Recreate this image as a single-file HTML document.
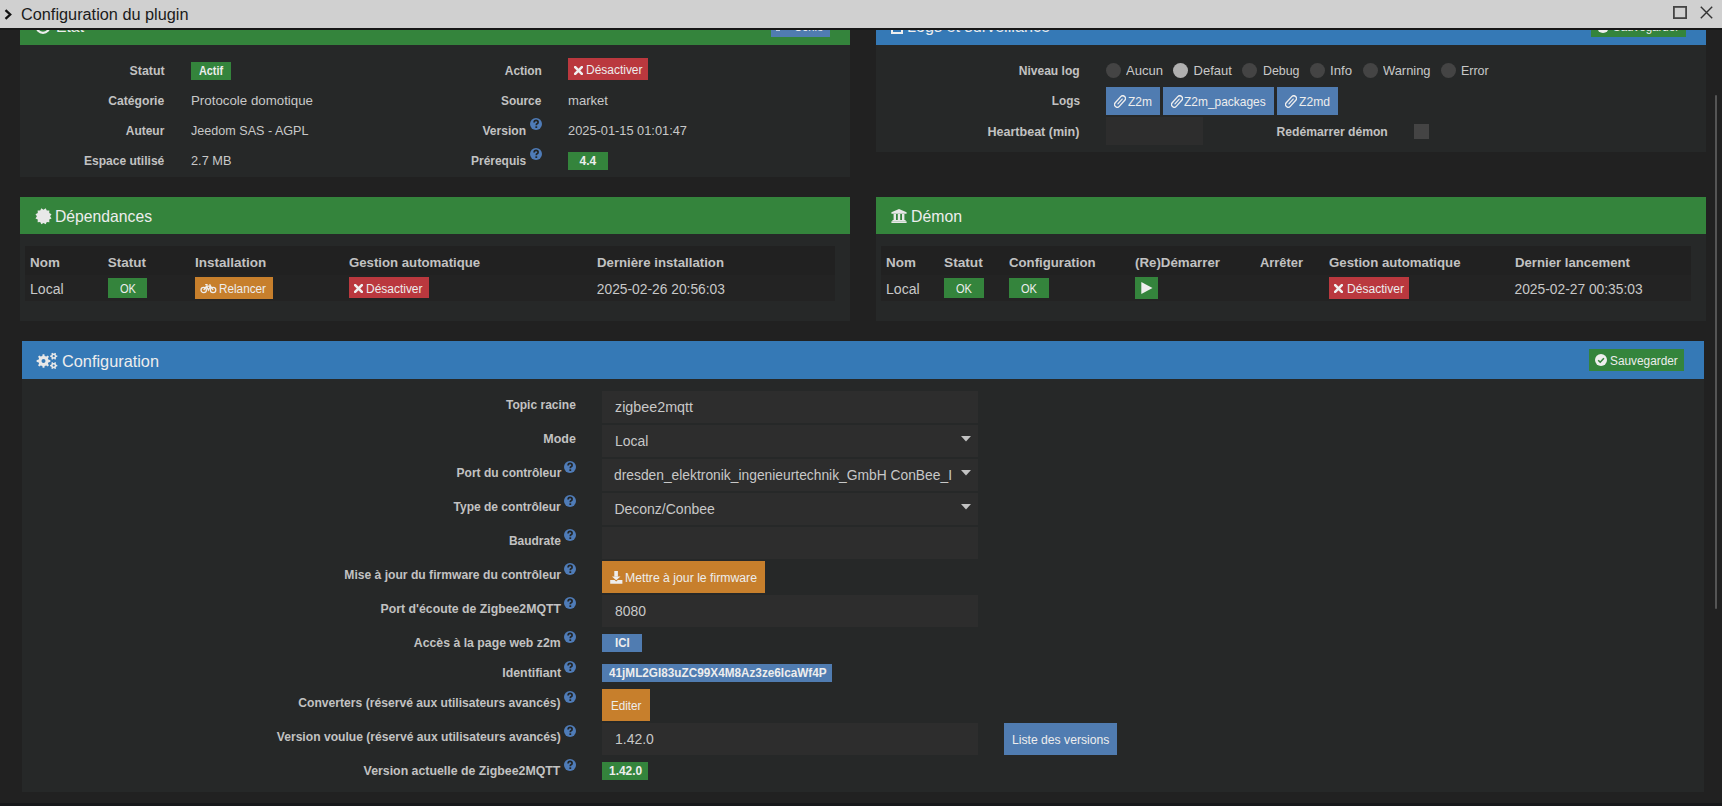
<!DOCTYPE html>
<html><head><meta charset="utf-8"><style>
html,body{margin:0;padding:0;}
body{width:1722px;height:806px;overflow:hidden;position:relative;background:#212121;font-family:"Liberation Sans",sans-serif;}
body>div,body>svg{position:absolute;}
.t{white-space:nowrap;}
</style></head><body>
<div style="left:0px;top:803px;width:1722px;height:3px;background:#17181a;"></div>
<div style="left:20px;top:30px;width:830px;height:15px;background:#34843c;"></div>
<div style="left:20px;top:45px;width:830px;height:132px;background:#262828;"></div>
<div style="left:771px;top:30px;width:59px;height:7px;background:#507cb1;"></div>
<svg style="left:35px;top:17px;width:16px;height:18px;" viewBox="0 0 16 18"><circle cx="8" cy="9" r="6.8" stroke="#eee" stroke-width="2.2" fill="none"/></svg>
<div class="t" style="left:55.90px;top:18.00px;font-size:16.5px;line-height:16.5px;color:#ededed;transform:scaleX(0.9540);transform-origin:left top;">État</div>
<div class="t" style="left:793.50px;top:21.00px;font-size:12.5px;line-height:12.5px;color:#ededed;transform:scaleX(0.8881);transform-origin:left top;">Confs</div>
<div style="left:776px;top:30px;width:4px;height:1px;background:#dfe6f0;opacity:0.8"></div>
<div class="t" style="left:130.13px;top:65.00px;font-size:12.2px;line-height:12.2px;font-weight:bold;color:#c2c2c2;transform:scaleX(1.0126);transform-origin:right top;">Statut</div>
<div class="t" style="left:108.43px;top:95.00px;font-size:12.2px;line-height:12.2px;font-weight:bold;color:#c2c2c2;transform:scaleX(0.9952);transform-origin:right top;">Catégorie</div>
<div class="t" style="left:125.39px;top:125.00px;font-size:12.2px;line-height:12.2px;font-weight:bold;color:#c2c2c2;transform:scaleX(0.9794);transform-origin:right top;">Auteur</div>
<div class="t" style="left:83.33px;top:155.00px;font-size:12.2px;line-height:12.2px;font-weight:bold;color:#c2c2c2;transform:scaleX(0.9880);transform-origin:right top;">Espace utilisé</div>
<div style="left:191px;top:62px;width:40px;height:18px;background:#34843c;"></div>
<div class="t" style="left:199.00px;top:65.00px;font-size:12px;line-height:12px;font-weight:bold;color:#ededed;transform:scaleX(0.9000);transform-origin:left top;">Actif</div>
<div class="t" style="left:191.00px;top:94.00px;font-size:13px;line-height:13px;color:#c8c8c8;transform:scaleX(1.0231);transform-origin:left top;">Protocole domotique</div>
<div class="t" style="left:191.00px;top:124.00px;font-size:13px;line-height:13px;color:#c8c8c8;transform:scaleX(0.9679);transform-origin:left top;">Jeedom SAS - AGPL</div>
<div class="t" style="left:191.00px;top:154.00px;font-size:13px;line-height:13px;color:#c8c8c8;transform:scaleX(0.9809);transform-origin:left top;">2.7 MB</div>
<div class="t" style="left:503.65px;top:65.00px;font-size:12.2px;line-height:12.2px;font-weight:bold;color:#c2c2c2;transform:scaleX(0.9801);transform-origin:right top;">Action</div>
<div class="t" style="left:500.24px;top:95.00px;font-size:12.2px;line-height:12.2px;font-weight:bold;color:#c2c2c2;transform:scaleX(0.9768);transform-origin:right top;">Source</div>
<div class="t" style="left:481.92px;top:125.00px;font-size:12.2px;line-height:12.2px;font-weight:bold;color:#c2c2c2;transform:scaleX(0.9914);transform-origin:right top;">Version</div>
<div class="t" style="left:469.72px;top:155.00px;font-size:12.2px;line-height:12.2px;font-weight:bold;color:#c2c2c2;transform:scaleX(0.9825);transform-origin:right top;">Prérequis</div>
<svg style="left:529.5px;top:118px;width:12px;height:12px;" viewBox="0 0 12 12"><circle cx="6" cy="6" r="6" fill="#4f7cb8"/><path d="M4.1 4.5 Q4.1 2.4 6.1 2.4 Q8.1 2.4 8.1 4.2 Q8.1 5.3 7 5.8 Q6.3 6.2 6.3 7.2" stroke="#232525" stroke-width="1.7" fill="none"/><rect x="5.4" y="8.3" width="1.8" height="1.7" fill="#232525"/></svg>
<svg style="left:529.5px;top:148px;width:12px;height:12px;" viewBox="0 0 12 12"><circle cx="6" cy="6" r="6" fill="#4f7cb8"/><path d="M4.1 4.5 Q4.1 2.4 6.1 2.4 Q8.1 2.4 8.1 4.2 Q8.1 5.3 7 5.8 Q6.3 6.2 6.3 7.2" stroke="#232525" stroke-width="1.7" fill="none"/><rect x="5.4" y="8.3" width="1.8" height="1.7" fill="#232525"/></svg>
<div style="left:568px;top:58px;width:80px;height:22px;background:#ba383e;"></div>
<svg style="left:573.5px;top:65.5px;width:9px;height:9px;" viewBox="0 0 9 9"><path d="M1.2 1.2 L7.8 7.8 M7.8 1.2 L1.2 7.8" stroke="#f0f0f0" stroke-width="2.6" stroke-linecap="square"/></svg>
<div class="t" style="left:585.50px;top:64.00px;font-size:12.5px;line-height:12.5px;color:#ededed;transform:scaleX(0.9569);transform-origin:left top;">Désactiver</div>
<div class="t" style="left:568.00px;top:94.00px;font-size:13px;line-height:13px;color:#c8c8c8;transform:scaleX(1.0068);transform-origin:left top;">market</div>
<div class="t" style="left:568.00px;top:124.00px;font-size:13px;line-height:13px;color:#c8c8c8;transform:scaleX(0.9858);transform-origin:left top;">2025-01-15 01:01:47</div>
<div style="left:568px;top:152px;width:40px;height:18px;background:#34843c;"></div>
<div class="t" style="left:579.50px;top:155.00px;font-size:12px;line-height:12px;font-weight:bold;color:#ededed;">4.4</div>
<div style="left:876px;top:30px;width:830px;height:15px;background:#3579b6;"></div>
<div style="left:876px;top:45px;width:830px;height:107px;background:#262828;"></div>
<div style="left:1591px;top:30px;width:95px;height:7px;background:#34843c;"></div>
<div style="left:891px;top:18px;width:12px;height:16px;background:transparent;border:2px solid #eee;box-sizing:border-box;"></div>
<div class="t" style="left:907.40px;top:18.00px;font-size:16.5px;line-height:16.5px;color:#ededed;transform:scaleX(0.9805);transform-origin:left top;">Logs et surveillance</div>
<svg style="left:1597px;top:21px;width:12px;height:12px;" viewBox="0 0 12 12"><circle cx="6" cy="6" r="6" fill="#eee"/></svg>
<div class="t" style="left:1612.70px;top:21.00px;font-size:12.5px;line-height:12.5px;color:#ededed;transform:scaleX(0.9221);transform-origin:left top;">Sauvegarder</div>
<div class="t" style="left:1018.11px;top:65.00px;font-size:12.2px;line-height:12.2px;font-weight:bold;color:#c2c2c2;transform:scaleX(0.9888);transform-origin:right top;">Niveau log</div>
<div class="t" style="left:1050.66px;top:95.00px;font-size:12.2px;line-height:12.2px;font-weight:bold;color:#c2c2c2;transform:scaleX(0.9711);transform-origin:right top;">Logs</div>
<div class="t" style="left:990.32px;top:126.00px;font-size:12.2px;line-height:12.2px;font-weight:bold;color:#c2c2c2;transform:scaleX(1.0281);transform-origin:right top;">Heartbeat (min)</div>
<div style="left:1106px;top:63px;width:15px;height:15px;background:#444444;border-radius:50%;"></div>
<div class="t" style="left:1126.00px;top:64.00px;font-size:13px;line-height:13px;color:#c8c8c8;transform:scaleX(1.0037);transform-origin:left top;">Aucun</div>
<div style="left:1173px;top:63px;width:15px;height:15px;background:#b0b0b0;border-radius:50%;"></div>
<div class="t" style="left:1193.60px;top:64.00px;font-size:13px;line-height:13px;color:#c8c8c8;">Defaut</div>
<div style="left:1242px;top:63px;width:15px;height:15px;background:#444444;border-radius:50%;"></div>
<div class="t" style="left:1262.70px;top:64.00px;font-size:13px;line-height:13px;color:#c8c8c8;transform:scaleX(0.9528);transform-origin:left top;">Debug</div>
<div style="left:1310px;top:63px;width:15px;height:15px;background:#444444;border-radius:50%;"></div>
<div class="t" style="left:1330.00px;top:64.00px;font-size:13px;line-height:13px;color:#c8c8c8;transform:scaleX(1.0146);transform-origin:left top;">Info</div>
<div style="left:1363px;top:63px;width:15px;height:15px;background:#444444;border-radius:50%;"></div>
<div class="t" style="left:1383.00px;top:64.00px;font-size:13px;line-height:13px;color:#c8c8c8;transform:scaleX(0.9911);transform-origin:left top;">Warning</div>
<div style="left:1441px;top:63px;width:15px;height:15px;background:#444444;border-radius:50%;"></div>
<div class="t" style="left:1461.00px;top:64.00px;font-size:13px;line-height:13px;color:#c8c8c8;transform:scaleX(0.9588);transform-origin:left top;">Error</div>
<div style="left:1106px;top:87px;width:54px;height:28px;background:#507cb1;"></div>
<svg style="left:1113.5px;top:95px;width:12px;height:13px;" viewBox="0 0 12 13"><g transform="rotate(42 6 6.5)"><rect x="3.3" y="-0.3" width="5.4" height="13.6" rx="2.7" stroke="#eeeeee" stroke-width="1.35" fill="none"/><path d="M6 3.2 V9.6" stroke="#eeeeee" stroke-width="1.2" stroke-linecap="round"/></g></svg>
<div class="t" style="left:1127.50px;top:95.00px;font-size:13px;line-height:13px;color:#ededed;transform:scaleX(0.9230);transform-origin:left top;">Z2m</div>
<div style="left:1163px;top:87px;width:111px;height:28px;background:#507cb1;"></div>
<svg style="left:1171px;top:95px;width:12px;height:13px;" viewBox="0 0 12 13"><g transform="rotate(42 6 6.5)"><rect x="3.3" y="-0.3" width="5.4" height="13.6" rx="2.7" stroke="#eeeeee" stroke-width="1.35" fill="none"/><path d="M6 3.2 V9.6" stroke="#eeeeee" stroke-width="1.2" stroke-linecap="round"/></g></svg>
<div class="t" style="left:1184.30px;top:95.00px;font-size:13px;line-height:13px;color:#ededed;transform:scaleX(0.9192);transform-origin:left top;">Z2m_packages</div>
<div style="left:1277px;top:87px;width:61px;height:28px;background:#507cb1;"></div>
<svg style="left:1285.3px;top:95px;width:12px;height:13px;" viewBox="0 0 12 13"><g transform="rotate(42 6 6.5)"><rect x="3.3" y="-0.3" width="5.4" height="13.6" rx="2.7" stroke="#eeeeee" stroke-width="1.35" fill="none"/><path d="M6 3.2 V9.6" stroke="#eeeeee" stroke-width="1.2" stroke-linecap="round"/></g></svg>
<div class="t" style="left:1299.20px;top:95.00px;font-size:13px;line-height:13px;color:#ededed;transform:scaleX(0.9329);transform-origin:left top;">Z2md</div>
<div style="left:1106px;top:117px;width:97px;height:28px;background:#2d2d2d;"></div>
<div class="t" style="left:1275.53px;top:126.00px;font-size:12.2px;line-height:12.2px;font-weight:bold;color:#c2c2c2;transform:scaleX(0.9958);transform-origin:right top;">Redémarrer démon</div>
<div style="left:1414px;top:124px;width:15px;height:15px;background:#444444;"></div>
<div style="left:20px;top:197px;width:830px;height:37px;background:#34843c;"></div>
<div style="left:20px;top:234px;width:830px;height:87px;background:#262828;"></div>
<div style="left:25px;top:246px;width:810px;height:29px;background:#212121;"></div>
<div style="left:25px;top:275px;width:810px;height:26px;background:#232323;"></div>
<div class="t" style="left:55.40px;top:208.00px;font-size:16.5px;line-height:16.5px;color:#ededed;transform:scaleX(0.9526);transform-origin:left top;">Dépendances</div>
<svg style="left:34.5px;top:207.7px;width:17px;height:17px;" viewBox="0 0 17 17"><polygon points="10.65,0.28 11.80,2.58 14.37,2.43 14.22,5.00 16.52,6.15 15.10,8.30 16.52,10.45 14.22,11.60 14.37,14.17 11.80,14.02 10.65,16.32 8.50,14.90 6.35,16.32 5.20,14.02 2.63,14.17 2.78,11.60 0.48,10.45 1.90,8.30 0.48,6.15 2.78,5.00 2.63,2.43 5.20,2.58 6.35,0.28 8.50,1.70" fill="#e8e8e8"/></svg>
<div class="t" style="left:30.00px;top:256.00px;font-size:13.5px;line-height:13.5px;font-weight:bold;color:#c2c2c2;transform:scaleX(0.9933);transform-origin:left top;">Nom</div>
<div class="t" style="left:107.80px;top:256.00px;font-size:13.5px;line-height:13.5px;font-weight:bold;color:#c2c2c2;">Statut</div>
<div class="t" style="left:195.10px;top:256.00px;font-size:13.5px;line-height:13.5px;font-weight:bold;color:#c2c2c2;">Installation</div>
<div class="t" style="left:348.80px;top:256.00px;font-size:13.5px;line-height:13.5px;font-weight:bold;color:#c2c2c2;transform:scaleX(0.9772);transform-origin:left top;">Gestion automatique</div>
<div class="t" style="left:596.80px;top:256.00px;font-size:13.5px;line-height:13.5px;font-weight:bold;color:#c2c2c2;transform:scaleX(0.9785);transform-origin:left top;">Dernière installation</div>
<div class="t" style="left:30.20px;top:283.00px;font-size:13.8px;line-height:13.8px;color:#c8c8c8;transform:scaleX(1.0215);transform-origin:left top;">Local</div>
<div style="left:108px;top:278px;width:39px;height:20px;background:#34843c;"></div>
<div class="t" style="left:119.50px;top:282.00px;font-size:13px;line-height:13px;color:#ededed;transform:scaleX(0.8518);transform-origin:left top;">OK</div>
<div style="left:195px;top:277px;width:78px;height:22px;background:#c77f2c;"></div>
<div class="t" style="left:219.30px;top:283.00px;font-size:12.5px;line-height:12.5px;color:#ededed;transform:scaleX(0.9395);transform-origin:left top;">Relancer</div>
<svg style="left:200px;top:283px;width:17px;height:11px;" viewBox="0 0 17 11"><circle cx="3.7" cy="7" r="2.7" stroke="#eee" stroke-width="1.25" fill="none"/><circle cx="13.1" cy="7" r="2.7" stroke="#eee" stroke-width="1.25" fill="none"/><path d="M3.7 7 L6.6 3.2 H10.6 L13.1 7 M6.6 3.2 L8.4 7 L10.6 3.2 M9.6 1.3 L10.6 3.2 M5.2 1.6 H7.6" stroke="#eee" stroke-width="1.3" fill="none"/></svg>
<div style="left:349px;top:277px;width:80px;height:21px;background:#ba383e;"></div>
<svg style="left:354px;top:284px;width:9px;height:9px;" viewBox="0 0 9 9"><path d="M1.2 1.2 L7.8 7.8 M7.8 1.2 L1.2 7.8" stroke="#f0f0f0" stroke-width="2.6" stroke-linecap="square"/></svg>
<div class="t" style="left:365.90px;top:283.00px;font-size:12.5px;line-height:12.5px;color:#ededed;transform:scaleX(0.9569);transform-origin:left top;">Désactiver</div>
<div class="t" style="left:596.80px;top:283.00px;font-size:13.8px;line-height:13.8px;color:#c8c8c8;">2025-02-26 20:56:03</div>
<div style="left:876px;top:197px;width:830px;height:37px;background:#34843c;"></div>
<div style="left:876px;top:234px;width:830px;height:87px;background:#262828;"></div>
<div style="left:881px;top:246px;width:810px;height:29px;background:#212121;"></div>
<div style="left:881px;top:275px;width:810px;height:26px;background:#232323;"></div>
<div class="t" style="left:911.00px;top:208.00px;font-size:16.5px;line-height:16.5px;color:#ededed;transform:scaleX(0.9588);transform-origin:left top;">Démon</div>
<svg style="left:891px;top:209px;width:16px;height:14px;" viewBox="0 0 16 14"><path d="M8 0 L15.6 3.2 V4.8 H0.4 V3.2 Z" fill="#e8e8e8"/><rect x="2.6" y="5" width="2.4" height="6" fill="#e8e8e8"/><rect x="6.8" y="5" width="2.4" height="6" fill="#e8e8e8"/><rect x="11" y="5" width="2.4" height="6" fill="#e8e8e8"/><rect x="1.4" y="11" width="13.2" height="1.3" fill="#e8e8e8"/><rect x="0.4" y="12.3" width="15.2" height="1.7" fill="#e8e8e8"/></svg>
<div class="t" style="left:886.00px;top:256.00px;font-size:13.5px;line-height:13.5px;font-weight:bold;color:#c2c2c2;transform:scaleX(0.9933);transform-origin:left top;">Nom</div>
<div class="t" style="left:944.00px;top:256.00px;font-size:13.5px;line-height:13.5px;font-weight:bold;color:#c2c2c2;transform:scaleX(1.0144);transform-origin:left top;">Statut</div>
<div class="t" style="left:1009.00px;top:256.00px;font-size:13.5px;line-height:13.5px;font-weight:bold;color:#c2c2c2;transform:scaleX(0.9776);transform-origin:left top;">Configuration</div>
<div class="t" style="left:1135.00px;top:256.00px;font-size:13.5px;line-height:13.5px;font-weight:bold;color:#c2c2c2;transform:scaleX(0.9851);transform-origin:left top;">(Re)Démarrer</div>
<div class="t" style="left:1259.60px;top:256.00px;font-size:13.5px;line-height:13.5px;font-weight:bold;color:#c2c2c2;transform:scaleX(0.9551);transform-origin:left top;">Arrêter</div>
<div class="t" style="left:1329.00px;top:256.00px;font-size:13.5px;line-height:13.5px;font-weight:bold;color:#c2c2c2;transform:scaleX(0.9794);transform-origin:left top;">Gestion automatique</div>
<div class="t" style="left:1514.50px;top:256.00px;font-size:13.5px;line-height:13.5px;font-weight:bold;color:#c2c2c2;transform:scaleX(0.9763);transform-origin:left top;">Dernier lancement</div>
<div class="t" style="left:886.20px;top:283.00px;font-size:13.8px;line-height:13.8px;color:#c8c8c8;transform:scaleX(1.0215);transform-origin:left top;">Local</div>
<div style="left:944px;top:278px;width:40px;height:20px;background:#34843c;"></div>
<div class="t" style="left:955.50px;top:282.00px;font-size:13px;line-height:13px;color:#ededed;transform:scaleX(0.8518);transform-origin:left top;">OK</div>
<div style="left:1009px;top:278px;width:40px;height:20px;background:#34843c;"></div>
<div class="t" style="left:1020.50px;top:282.00px;font-size:13px;line-height:13px;color:#ededed;transform:scaleX(0.8518);transform-origin:left top;">OK</div>
<div style="left:1135px;top:277px;width:23px;height:22px;background:#34843c;"></div>
<svg style="left:1140.5px;top:282.4px;width:12px;height:12px;" viewBox="0 0 12 12"><path d="M0.3 0.1 L11.5 6 L0.3 11.9 Z" fill="#eee"/></svg>
<div style="left:1329px;top:277px;width:80px;height:22px;background:#ba383e;"></div>
<svg style="left:1334px;top:284px;width:9px;height:9px;" viewBox="0 0 9 9"><path d="M1.2 1.2 L7.8 7.8 M7.8 1.2 L1.2 7.8" stroke="#f0f0f0" stroke-width="2.6" stroke-linecap="square"/></svg>
<div class="t" style="left:1346.50px;top:283.00px;font-size:12.5px;line-height:12.5px;color:#ededed;transform:scaleX(0.9653);transform-origin:left top;">Désactiver</div>
<div class="t" style="left:1514.50px;top:283.00px;font-size:13.8px;line-height:13.8px;color:#c8c8c8;">2025-02-27 00:35:03</div>
<div style="left:22px;top:341px;width:1682px;height:38px;background:#3579b6;"></div>
<div style="left:22px;top:379px;width:1682px;height:413px;background:#262828;"></div>
<div class="t" style="left:62.00px;top:353.00px;font-size:16.5px;line-height:16.5px;color:#ededed;transform:scaleX(0.9883);transform-origin:left top;">Configuration</div>
<svg style="left:36px;top:352px;width:22px;height:18px;" viewBox="0 0 22 18"><path fill-rule="evenodd" fill="#e8e8e8" d="M12.57 7.87 L14.34 8.09 L14.34 9.91 L12.57 10.13 L11.89 11.79 L12.98 13.19 L11.69 14.48 L10.29 13.39 L8.63 14.07 L8.41 15.84 L6.59 15.84 L6.37 14.07 L4.71 13.39 L3.31 14.48 L2.02 13.19 L3.11 11.79 L2.43 10.13 L0.66 9.91 L0.66 8.09 L2.43 7.87 L3.11 6.21 L2.02 4.81 L3.31 3.52 L4.71 4.61 L6.37 3.93 L6.59 2.16 L8.41 2.16 L8.63 3.93 L10.29 4.61 L11.69 3.52 L12.98 4.81 L11.89 6.21 Z M9.50 9.00 A2.00 2.00 0 1 0 5.50 9.00 A2.00 2.00 0 1 0 9.50 9.00 Z"/><path fill-rule="evenodd" fill="#e8e8e8" d="M20.28 3.40 L21.34 3.54 L21.34 4.86 L20.28 5.00 L19.68 6.03 L20.09 7.02 L18.95 7.68 L18.30 6.83 L17.10 6.83 L16.45 7.68 L15.31 7.02 L15.72 6.03 L15.12 5.00 L14.06 4.86 L14.06 3.54 L15.12 3.40 L15.72 2.37 L15.31 1.38 L16.45 0.72 L17.10 1.57 L18.30 1.57 L18.95 0.72 L20.09 1.38 L19.68 2.37 Z M18.80 4.20 A1.10 1.10 0 1 0 16.60 4.20 A1.10 1.10 0 1 0 18.80 4.20 Z"/><path fill-rule="evenodd" fill="#e8e8e8" d="M20.28 12.80 L21.34 12.94 L21.34 14.26 L20.28 14.40 L19.68 15.43 L20.09 16.42 L18.95 17.08 L18.30 16.23 L17.10 16.23 L16.45 17.08 L15.31 16.42 L15.72 15.43 L15.12 14.40 L14.06 14.26 L14.06 12.94 L15.12 12.80 L15.72 11.77 L15.31 10.78 L16.45 10.12 L17.10 10.97 L18.30 10.97 L18.95 10.12 L20.09 10.78 L19.68 11.77 Z M18.80 13.60 A1.10 1.10 0 1 0 16.60 13.60 A1.10 1.10 0 1 0 18.80 13.60 Z"/></svg>
<div style="left:1589px;top:349px;width:95px;height:22px;background:#34843c;"></div>
<svg style="left:1595px;top:354px;width:12px;height:12px;" viewBox="0 0 12 12"><circle cx="6" cy="6" r="6" fill="#eee"/><path d="M3.2 6.2 L5.2 8.2 L8.9 4.3" stroke="#34843c" stroke-width="1.6" fill="none"/></svg>
<div class="t" style="left:1610.20px;top:355.00px;font-size:12.5px;line-height:12.5px;color:#ededed;transform:scaleX(0.9472);transform-origin:left top;">Sauvegarder</div>
<div class="t" style="left:505.34px;top:399.00px;font-size:12.2px;line-height:12.2px;font-weight:bold;color:#c2c2c2;transform:scaleX(0.9865);transform-origin:right top;">Topic racine</div>
<div class="t" style="left:544.45px;top:433.00px;font-size:12.2px;line-height:12.2px;font-weight:bold;color:#c2c2c2;transform:scaleX(1.0234);transform-origin:right top;">Mode</div>
<div class="t" style="left:454.59px;top:467.00px;font-size:12.2px;line-height:12.2px;font-weight:bold;color:#c2c2c2;transform:scaleX(0.9848);transform-origin:right top;">Port du contrôleur</div>
<svg style="left:564px;top:461px;width:12px;height:12px;" viewBox="0 0 12 12"><circle cx="6" cy="6" r="6" fill="#4f7cb8"/><path d="M4.1 4.5 Q4.1 2.4 6.1 2.4 Q8.1 2.4 8.1 4.2 Q8.1 5.3 7 5.8 Q6.3 6.2 6.3 7.2" stroke="#232525" stroke-width="1.7" fill="none"/><rect x="5.4" y="8.3" width="1.8" height="1.7" fill="#232525"/></svg>
<div class="t" style="left:452.09px;top:501.00px;font-size:12.2px;line-height:12.2px;font-weight:bold;color:#c2c2c2;transform:scaleX(0.9861);transform-origin:right top;">Type de contrôleur</div>
<svg style="left:564px;top:495px;width:12px;height:12px;" viewBox="0 0 12 12"><circle cx="6" cy="6" r="6" fill="#4f7cb8"/><path d="M4.1 4.5 Q4.1 2.4 6.1 2.4 Q8.1 2.4 8.1 4.2 Q8.1 5.3 7 5.8 Q6.3 6.2 6.3 7.2" stroke="#232525" stroke-width="1.7" fill="none"/><rect x="5.4" y="8.3" width="1.8" height="1.7" fill="#232525"/></svg>
<div class="t" style="left:508.12px;top:535.00px;font-size:12.2px;line-height:12.2px;font-weight:bold;color:#c2c2c2;transform:scaleX(0.9833);transform-origin:right top;">Baudrate</div>
<svg style="left:564px;top:529px;width:12px;height:12px;" viewBox="0 0 12 12"><circle cx="6" cy="6" r="6" fill="#4f7cb8"/><path d="M4.1 4.5 Q4.1 2.4 6.1 2.4 Q8.1 2.4 8.1 4.2 Q8.1 5.3 7 5.8 Q6.3 6.2 6.3 7.2" stroke="#232525" stroke-width="1.7" fill="none"/><rect x="5.4" y="8.3" width="1.8" height="1.7" fill="#232525"/></svg>
<div class="t" style="left:342.72px;top:569.00px;font-size:12.2px;line-height:12.2px;font-weight:bold;color:#c2c2c2;transform:scaleX(0.9941);transform-origin:right top;">Mise à jour du firmware du contrôleur</div>
<svg style="left:564px;top:563px;width:12px;height:12px;" viewBox="0 0 12 12"><circle cx="6" cy="6" r="6" fill="#4f7cb8"/><path d="M4.1 4.5 Q4.1 2.4 6.1 2.4 Q8.1 2.4 8.1 4.2 Q8.1 5.3 7 5.8 Q6.3 6.2 6.3 7.2" stroke="#232525" stroke-width="1.7" fill="none"/><rect x="5.4" y="8.3" width="1.8" height="1.7" fill="#232525"/></svg>
<div class="t" style="left:381.86px;top:603.00px;font-size:12.2px;line-height:12.2px;font-weight:bold;color:#c2c2c2;transform:scaleX(1.0081);transform-origin:right top;">Port d'écoute de Zigbee2MQTT</div>
<svg style="left:564px;top:597px;width:12px;height:12px;" viewBox="0 0 12 12"><circle cx="6" cy="6" r="6" fill="#4f7cb8"/><path d="M4.1 4.5 Q4.1 2.4 6.1 2.4 Q8.1 2.4 8.1 4.2 Q8.1 5.3 7 5.8 Q6.3 6.2 6.3 7.2" stroke="#232525" stroke-width="1.7" fill="none"/><rect x="5.4" y="8.3" width="1.8" height="1.7" fill="#232525"/></svg>
<div class="t" style="left:415.21px;top:637.00px;font-size:12.2px;line-height:12.2px;font-weight:bold;color:#c2c2c2;transform:scaleX(1.0083);transform-origin:right top;">Accès à la page web z2m</div>
<svg style="left:564px;top:631px;width:12px;height:12px;" viewBox="0 0 12 12"><circle cx="6" cy="6" r="6" fill="#4f7cb8"/><path d="M4.1 4.5 Q4.1 2.4 6.1 2.4 Q8.1 2.4 8.1 4.2 Q8.1 5.3 7 5.8 Q6.3 6.2 6.3 7.2" stroke="#232525" stroke-width="1.7" fill="none"/><rect x="5.4" y="8.3" width="1.8" height="1.7" fill="#232525"/></svg>
<div class="t" style="left:502.71px;top:667.00px;font-size:12.2px;line-height:12.2px;font-weight:bold;color:#c2c2c2;transform:scaleX(1.0123);transform-origin:right top;">Identifiant</div>
<svg style="left:564px;top:661px;width:12px;height:12px;" viewBox="0 0 12 12"><circle cx="6" cy="6" r="6" fill="#4f7cb8"/><path d="M4.1 4.5 Q4.1 2.4 6.1 2.4 Q8.1 2.4 8.1 4.2 Q8.1 5.3 7 5.8 Q6.3 6.2 6.3 7.2" stroke="#232525" stroke-width="1.7" fill="none"/><rect x="5.4" y="8.3" width="1.8" height="1.7" fill="#232525"/></svg>
<div class="t" style="left:297.20px;top:697.00px;font-size:12.2px;line-height:12.2px;font-weight:bold;color:#c2c2c2;transform:scaleX(0.9951);transform-origin:right top;">Converters (réservé aux utilisateurs avancés)</div>
<svg style="left:564px;top:691px;width:12px;height:12px;" viewBox="0 0 12 12"><circle cx="6" cy="6" r="6" fill="#4f7cb8"/><path d="M4.1 4.5 Q4.1 2.4 6.1 2.4 Q8.1 2.4 8.1 4.2 Q8.1 5.3 7 5.8 Q6.3 6.2 6.3 7.2" stroke="#232525" stroke-width="1.7" fill="none"/><rect x="5.4" y="8.3" width="1.8" height="1.7" fill="#232525"/></svg>
<div class="t" style="left:274.84px;top:731.00px;font-size:12.2px;line-height:12.2px;font-weight:bold;color:#c2c2c2;transform:scaleX(0.9938);transform-origin:right top;">Version voulue (réservé aux utilisateurs avancés)</div>
<svg style="left:564px;top:725px;width:12px;height:12px;" viewBox="0 0 12 12"><circle cx="6" cy="6" r="6" fill="#4f7cb8"/><path d="M4.1 4.5 Q4.1 2.4 6.1 2.4 Q8.1 2.4 8.1 4.2 Q8.1 5.3 7 5.8 Q6.3 6.2 6.3 7.2" stroke="#232525" stroke-width="1.7" fill="none"/><rect x="5.4" y="8.3" width="1.8" height="1.7" fill="#232525"/></svg>
<div class="t" style="left:366.42px;top:765.00px;font-size:12.2px;line-height:12.2px;font-weight:bold;color:#c2c2c2;transform:scaleX(1.0124);transform-origin:right top;">Version actuelle de Zigbee2MQTT</div>
<svg style="left:564px;top:759px;width:12px;height:12px;" viewBox="0 0 12 12"><circle cx="6" cy="6" r="6" fill="#4f7cb8"/><path d="M4.1 4.5 Q4.1 2.4 6.1 2.4 Q8.1 2.4 8.1 4.2 Q8.1 5.3 7 5.8 Q6.3 6.2 6.3 7.2" stroke="#232525" stroke-width="1.7" fill="none"/><rect x="5.4" y="8.3" width="1.8" height="1.7" fill="#232525"/></svg>
<div style="left:602px;top:391px;width:376px;height:32px;background:#2d2d2d;"></div>
<div style="left:602px;top:425px;width:376px;height:32px;background:#2d2d2d;"></div>
<div style="left:602px;top:459px;width:376px;height:32px;background:#2d2d2d;"></div>
<div style="left:602px;top:493px;width:376px;height:32px;background:#2d2d2d;"></div>
<div style="left:602px;top:527px;width:376px;height:32px;background:#2d2d2d;"></div>
<div class="t" style="left:614.70px;top:400.00px;font-size:14px;line-height:14px;color:#c8c8c8;transform:scaleX(1.0227);transform-origin:left top;">zigbee2mqtt</div>
<div class="t" style="left:614.70px;top:434.00px;font-size:14px;line-height:14px;color:#c8c8c8;transform:scaleX(0.9949);transform-origin:left top;">Local</div>
<div class="t" style="left:614.40px;top:468.00px;font-size:14px;line-height:14px;color:#c8c8c8;transform:scaleX(0.9870);transform-origin:left top;">dresden_elektronik_ingenieurtechnik_GmbH ConBee_I</div>
<div class="t" style="left:614.40px;top:502.00px;font-size:14px;line-height:14px;color:#c8c8c8;">Deconz/Conbee</div>
<svg style="left:961px;top:436px;width:10px;height:6px;" viewBox="0 0 10 6"><path d="M0 0 L10 0 L5 5.5 Z" fill="#c2c2c2"/></svg>
<svg style="left:961px;top:470px;width:10px;height:6px;" viewBox="0 0 10 6"><path d="M0 0 L10 0 L5 5.5 Z" fill="#c2c2c2"/></svg>
<svg style="left:961px;top:504px;width:10px;height:6px;" viewBox="0 0 10 6"><path d="M0 0 L10 0 L5 5.5 Z" fill="#c2c2c2"/></svg>
<div style="left:602px;top:561px;width:163px;height:32px;background:#c77f2c;"></div>
<svg style="left:610px;top:571px;width:13px;height:13px;" viewBox="0 0 13 13"><rect x="4.3" y="0" width="3.6" height="5.6" fill="#eee"/><path d="M1.9 5.5 H10.5 L6.2 9.3 Z" fill="#eee"/><path d="M0.2 9.1 H4.6 L6.2 10.4 L7.8 9.1 H12.4 V12.8 H0.2 Z" fill="#eee"/></svg>
<div class="t" style="left:625.30px;top:572.00px;font-size:12.5px;line-height:12.5px;color:#ededed;transform:scaleX(0.9795);transform-origin:left top;">Mettre à jour le firmware</div>
<div style="left:602px;top:595px;width:376px;height:32px;background:#2d2d2d;"></div>
<div class="t" style="left:614.50px;top:604.00px;font-size:14px;line-height:14px;color:#c8c8c8;transform:scaleX(0.9953);transform-origin:left top;">8080</div>
<div style="left:602px;top:634px;width:40px;height:18px;background:#507cb1;"></div>
<div class="t" style="left:615.40px;top:637.00px;font-size:12px;line-height:12px;font-weight:bold;color:#ededed;transform:scaleX(0.9521);transform-origin:left top;">ICI</div>
<div style="left:602px;top:664px;width:230px;height:18px;background:#507cb1;"></div>
<div class="t" style="left:608.70px;top:667.00px;font-size:12px;line-height:12px;font-weight:bold;color:#ededed;transform:scaleX(0.9798);transform-origin:left top;">41jML2GI83uZC99X4M8Az3ze6IcaWf4P</div>
<div style="left:602px;top:689px;width:48px;height:32px;background:#c77f2c;"></div>
<div class="t" style="left:610.50px;top:700.00px;font-size:12.5px;line-height:12.5px;color:#ededed;transform:scaleX(0.9340);transform-origin:left top;">Editer</div>
<div style="left:602px;top:723px;width:376px;height:32px;background:#2d2d2d;"></div>
<div class="t" style="left:614.50px;top:732.00px;font-size:14px;line-height:14px;color:#c8c8c8;transform:scaleX(0.9968);transform-origin:left top;">1.42.0</div>
<div style="left:1004px;top:723px;width:113px;height:32px;background:#507cb1;"></div>
<div class="t" style="left:1011.60px;top:734.00px;font-size:12.5px;line-height:12.5px;color:#ededed;transform:scaleX(0.9735);transform-origin:left top;">Liste des versions</div>
<div style="left:602px;top:762px;width:46px;height:18px;background:#34843c;"></div>
<div class="t" style="left:609.00px;top:765.00px;font-size:12px;line-height:12px;font-weight:bold;color:#ededed;transform:scaleX(0.9951);transform-origin:left top;">1.42.0</div>
<div style="left:0px;top:0px;width:1722px;height:28px;background:#d0d0d0;"></div>
<div style="left:0px;top:28px;width:1722px;height:2px;background:#161616;"></div>
<svg style="left:4px;top:9px;width:8px;height:11px;" viewBox="0 0 8 11"><path d="M1.5 1.2 L6.2 5.5 L1.5 9.8" stroke="#111" stroke-width="2.3" fill="none"/></svg>
<div class="t" style="left:20.70px;top:7.00px;font-size:16px;line-height:16px;color:#1b1b1b;transform:scaleX(1.0178);transform-origin:left top;">Configuration du plugin</div>
<svg style="left:1673px;top:6px;width:14px;height:13px;" viewBox="0 0 14 13"><rect x="0.9" y="0.9" width="12.2" height="11.2" stroke="#444" stroke-width="1.8" fill="none"/></svg>
<svg style="left:1700px;top:6px;width:13px;height:13px;" viewBox="0 0 13 13"><path d="M0.8 0.8 L12.2 12.2 M12.2 0.8 L0.8 12.2" stroke="#333" stroke-width="1.4"/></svg>
<div style="left:1715px;top:95px;width:2px;height:514px;background:#555555;border-radius:1px;"></div>
</body></html>
